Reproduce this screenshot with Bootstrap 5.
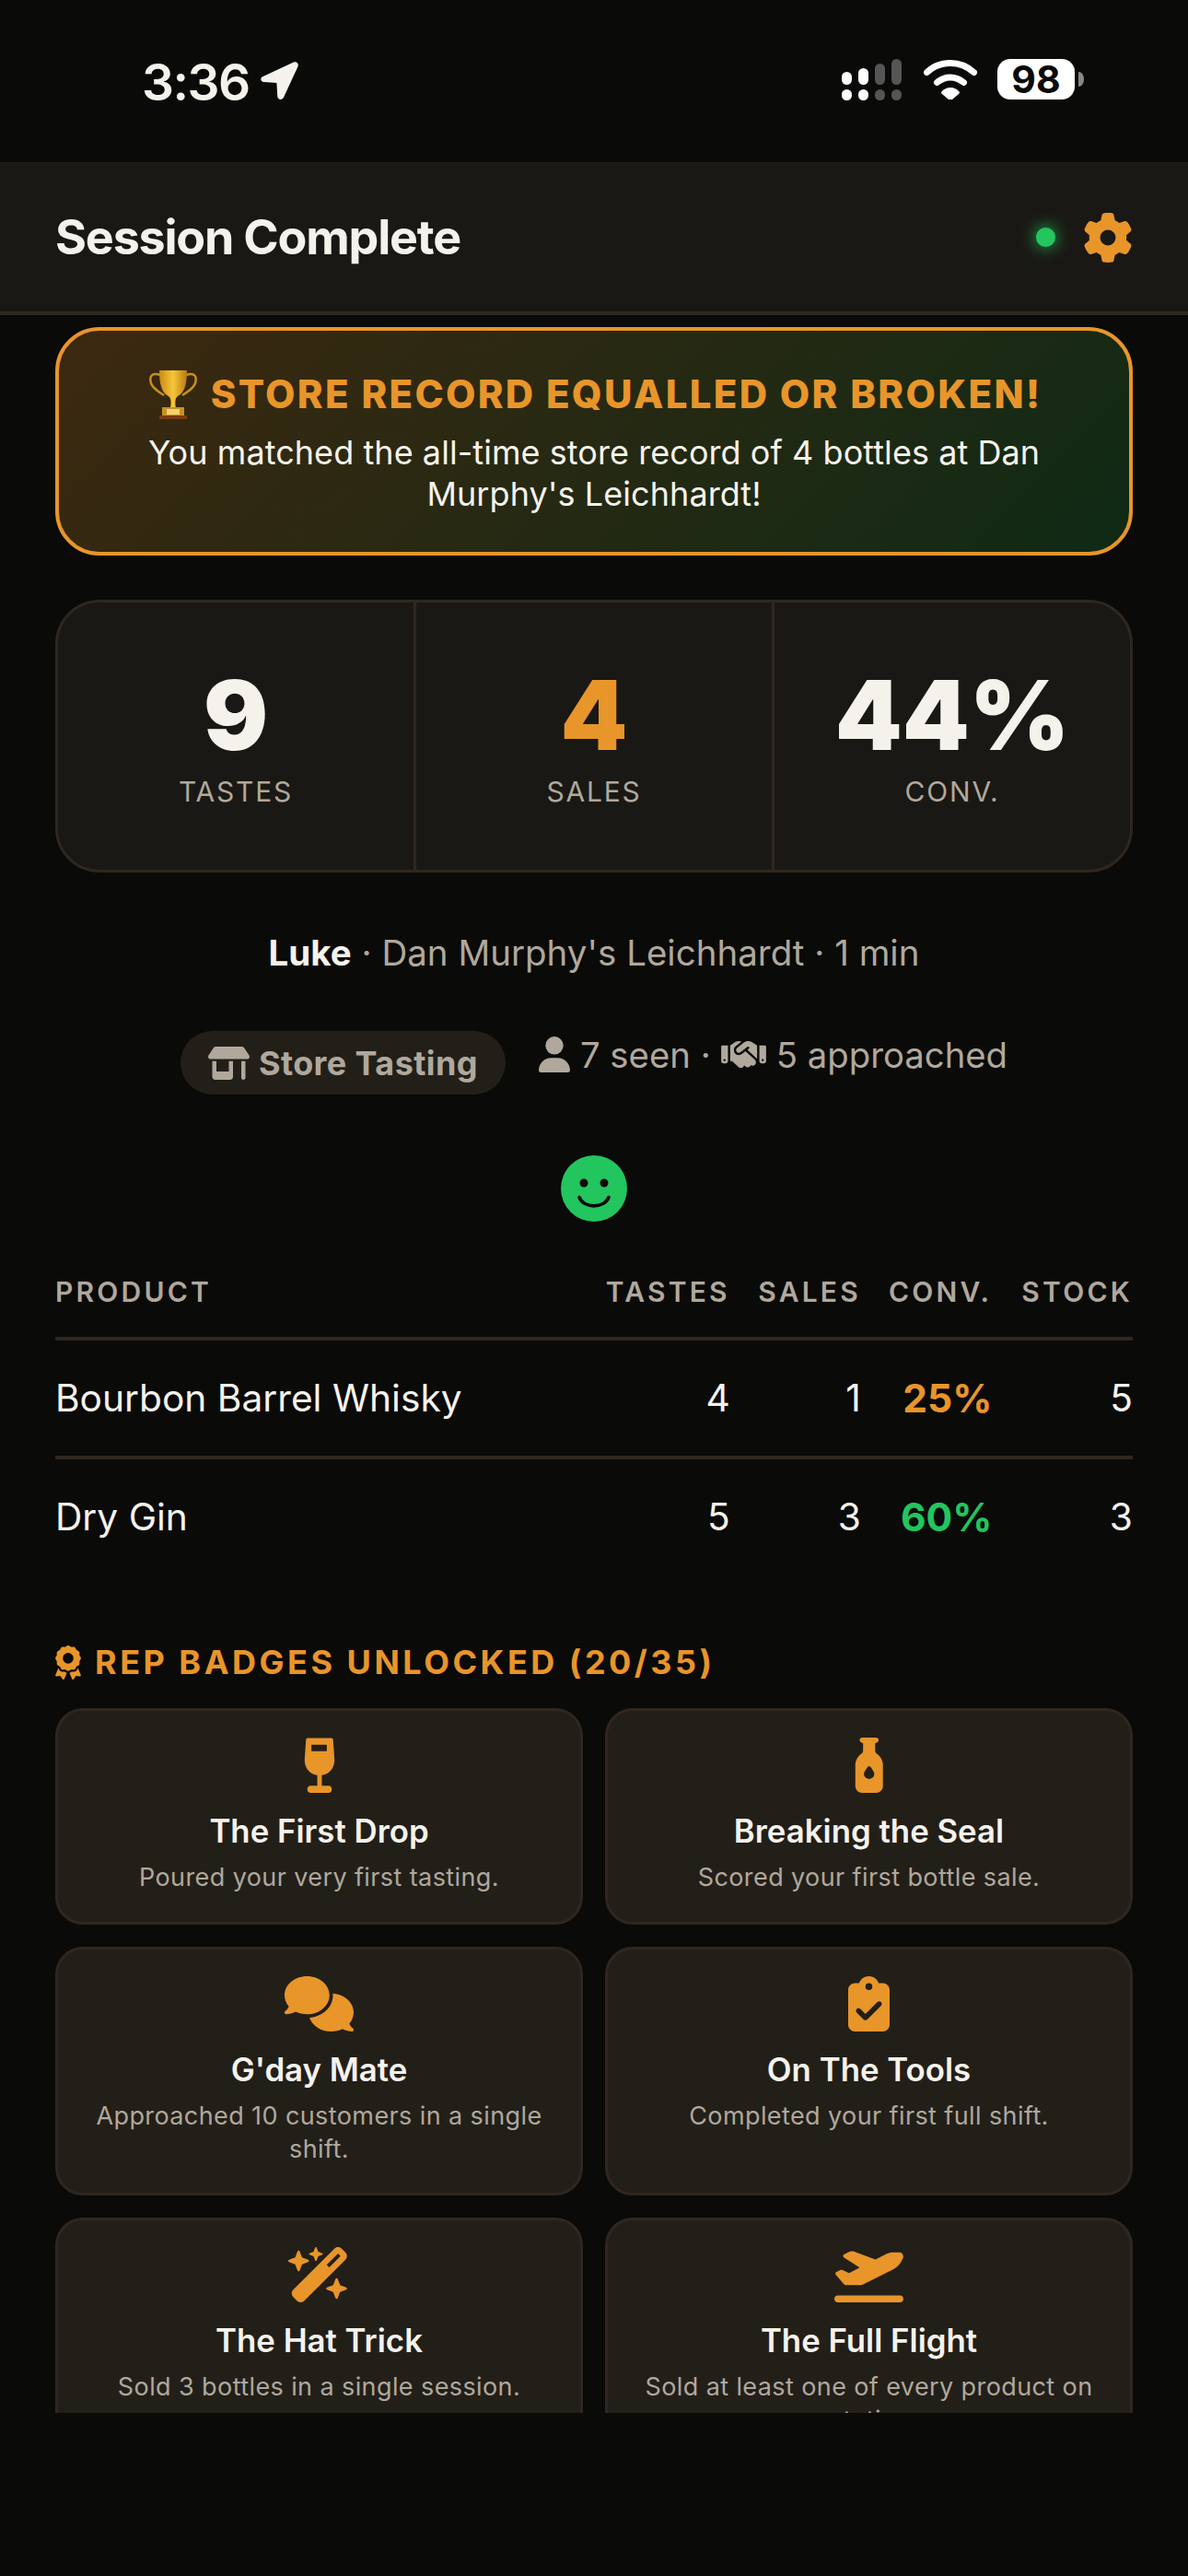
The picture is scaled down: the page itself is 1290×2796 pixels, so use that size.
<!DOCTYPE html>
<html lang="en">
<head>
<meta charset="utf-8">
<title>Session Complete</title>
<link href="https://cdn.jsdelivr.net/npm/bootstrap@5.3.0/dist/css/bootstrap.min.css" rel="stylesheet">
<style>
html,body{background:#0a0a08;margin:0}
body{font-family:Inter,"Liberation Sans",sans-serif;color:#f5f2ec;width:1290px;height:2796px;overflow:hidden}
svg{display:block;fill:currentColor}
.accent{color:#e8952a}.okc{color:#22c55e}.muted{color:#b0a89c}
.statusbar{height:176px;padding:64px 113px 0 154px;align-items:flex-start}
.clock{font-size:55px;font-weight:600;line-height:44px;letter-spacing:-1.500px;margin-top:3px}
.clockwrap{gap:11px}
.arrow{margin-top:2px}
.wifi{margin-left:24px}
.battery{width:84px;height:44px;border-radius:14px;background:#fff;color:#0a0a08;font-size:41px;font-weight:700;line-height:44px;text-align:center;margin-left:22px}
.nub{margin:14px 0 0 4px}
.topbar{height:166px;background:#1a1814;border-top:1px solid #1f1c17;border-bottom:4px solid #2f271f;padding:0 60px}
.topbar h1{font-size:52px;font-weight:700;margin:0;padding-top:2px;color:#f5f2ec;letter-spacing:-1.200px}
.dot{width:21px;height:21px;border-radius:50%;background:#22c55e;box-shadow:0 0 18px #22c55e;margin-right:30px}
.pane{height:2277px;overflow:hidden;padding:13px 60px 0}
.banner{height:248px;border:4px solid #e8952a;border-radius:48px;background:linear-gradient(135deg,#3d2810,#0f2a15);padding:41px 44px 0;text-align:center}
.banner-head{font-size:42px;font-weight:800;letter-spacing:2.300px;line-height:56px;color:#e8952a;gap:15px;padding-left:3px}
.banner-text{font-size:36px;letter-spacing:.06px;line-height:45px;margin-top:13px}
.stats{height:296px;margin-top:48px;border:3px solid #2f271f;border-radius:48px;background:#1a1814;overflow:hidden}
.stat{flex:1 1 0;border-right:3px solid #2f271f;text-align:center;padding-top:61px}
.stat:last-child{border-right:0}
.statnum{font-size:104px;font-weight:900;line-height:122px}
.statlab{font-size:30px;letter-spacing:1.800px;line-height:36px;color:#b0a89c;margin-top:4px}
.meta{font-size:38.500px;line-height:48px;text-align:center;margin-top:63px;color:#b0a89c}
.meta b{color:#f5f2ec;font-weight:700}
.chips{margin-top:61px;gap:36px;height:69px;color:#b0a89c}
.pill{background:#221f19;border-radius:35px;height:69px;padding:0 30px;gap:10px;font-size:36px;font-weight:700;letter-spacing:.4px}
.seen{font-size:38.300px;line-height:48px;gap:11px;height:69px;align-items:flex-start;padding-top:2px}
.mood{margin-top:66px}
.tbl{margin:58px 0 0;width:100%;--bs-table-bg:transparent;--bs-table-color:#f5f2ec;--bs-table-border-color:#2f271f}
.tbl th{font-size:30px;font-weight:600;letter-spacing:3.200px;color:#b0a89c;padding:0 0 31px 33px;line-height:36px;border-bottom:4px solid #2f271f;white-space:nowrap}
.tbl td{font-size:40.700px;line-height:52px;padding:36.500px 0 36.500px 33px;border-bottom:4px solid #2f271f}
.tbl tr:last-child td{border-bottom:0}
.tbl th:first-child,.tbl td:first-child{padding-left:0;width:100%}
.tbl th:nth-child(3),.tbl td:nth-child(3){padding-left:30.500px}
.tbl th:nth-child(4),.tbl td:nth-child(4){padding-left:30px}
.tbl th:nth-child(5),.tbl td:nth-child(5){padding-left:32px}
.tbl td.rate{font-weight:700;font-size:42.500px}
.section{font-size:36px;font-weight:700;letter-spacing:3.500px;color:#e8952a;line-height:44px;margin-top:73px;gap:15px}
.badgegrid{display:grid;grid-template-columns:1fr 1fr;gap:24px;margin-top:28px}
.tile{background:#221f19;border:3px solid #2f271f;border-radius:30px;padding:29px 36px 29.500px;text-align:center}
.tile svg{margin:0 auto;height:60px;color:#e8952a}
.tile h3{font-size:34.800px;font-weight:600;line-height:44px;margin:19px 0 11px;color:#f5f2ec}
.tile p{font-size:27px;letter-spacing:.400px;line-height:36px;margin:0;color:#b0a89c}
</style>
</head>
<body>
<div class="d-flex justify-content-between statusbar">
  <div class="d-flex clockwrap"><span class="clock">3:36</span>
    <svg class="arrow" width="43" height="43" viewBox="0 0 42 42"><path d="M3.500 16.500 36 1.500c3-1.300 5.800 1.500 4.500 4.500L25.500 38.500c-1.700 3.700-6.500 3-6.700-1L18 23.500 4.500 22.500c-3.800-.3-4.500-4.500-1-6z"/></svg>
  </div>
  <div class="d-flex align-items-start">
    <svg width="65" height="45" viewBox="0 0 65 45"><g fill="#fff"><rect y="14" width="11" height="14" rx="5.500"/><rect x="18" y="10" width="11" height="18" rx="5.500"/><rect y="33" width="11" height="12" rx="5.500"/><rect x="18" y="33" width="11" height="12" rx="5.500"/></g><g fill="#555"><rect x="36" y="5" width="11" height="23" rx="5.500"/><rect x="54" width="11" height="28" rx="5.500"/><rect x="36" y="33" width="11" height="12" rx="5.500"/><rect x="54" y="33" width="11" height="12" rx="5.500"/></g></svg>
    <svg class="wifi" width="58" height="44" viewBox="0 0 58 44"><path d="M3.500 14.500C18 1 40 1 54.500 14.500M14.500 25.500C23 18 35 18 43.500 25.500" fill="none" stroke="#fff" stroke-width="7" stroke-linecap="round"/><path d="M19.500 35.500C24 29.500 34 29.500 38.500 35.500 39.500 36.500 39 37 38 38L31 44H27L20 38C19 37 18.500 36.500 19.500 35.500z" fill="#fff"/></svg>
    <div class="battery">98</div>
    <svg class="nub" width="6" height="16" viewBox="0 0 6 16"><path d="M0 0c3.500 0 6 3.500 6 8s-2.500 8-6 8z" fill="#888"/></svg>
  </div>
</div>
<header class="d-flex justify-content-between align-items-center topbar">
  <h1>Session Complete</h1>
  <div class="d-flex align-items-center"><span class="dot"></span>
    <svg class="accent" width="54" height="54" viewBox="0 0 512 512"><path d="M495.900 166.600c3.200 8.700.5 18.400-6.400 24.600l-43.300 39.400c1.100 8.300 1.700 16.800 1.700 25.400s-.6 17.100-1.700 25.400l43.300 39.400c6.900 6.200 9.600 15.900 6.400 24.600c-4.400 11.900-9.700 23.300-15.800 34.300l-4.700 8.100c-6.600 11-14 21.400-22.100 31.200c-5.900 7.200-15.700 9.600-24.500 6.800l-55.700-17.700c-13.400 10.300-28.200 18.900-44 25.400l-12.500 57.100c-2 9.100-9 16.300-18.200 17.800c-13.800 2.300-28 3.500-42.500 3.500s-28.700-1.200-42.500-3.500c-9.200-1.500-16.200-8.700-18.200-17.800l-12.500-57.100c-15.800-6.500-30.600-15.100-44-25.400L83.100 425.900c-8.800 2.800-18.600.3-24.500-6.800c-8.100-9.800-15.500-20.200-22.100-31.200l-4.700-8.100c-6.100-11-11.400-22.400-15.800-34.300c-3.200-8.700-.5-18.400 6.400-24.600l43.300-39.400C64.600 273.100 64 264.600 64 256s.6-17.100 1.700-25.400L22.400 191.200c-6.900-6.200-9.600-15.900-6.400-24.600c4.400-11.900 9.700-23.300 15.800-34.300l4.700-8.100c6.600-11 14-21.400 22.100-31.200c5.900-7.200 15.700-9.600 24.500-6.800l55.700 17.700c13.400-10.300 28.200-18.900 44-25.400l12.500-57.100c2-9.100 9-16.300 18.200-17.800C227.300 1.200 241.500 0 256 0s28.700 1.200 42.500 3.500c9.200 1.500 16.200 8.700 18.200 17.800l12.500 57.100c15.800 6.500 30.600 15.100 44 25.400l55.700-17.700c8.800-2.800 18.600-.3 24.500 6.800c8.100 9.800 15.500 20.200 22.100 31.200l4.700 8.100c6.100 11 11.400 22.400 15.800 34.300zM256 336a80 80 0 1 0 0-160 80 80 0 1 0 0 160z"/></svg>
  </div>
</header>
<main class="pane">
  <section class="banner">
    <div class="d-flex justify-content-center align-items-center banner-head">
      <svg width="52" height="54" viewBox="0 0 52 54"><defs><linearGradient id="gold" x1="0" x2="1"><stop offset="0" stop-color="#c98a12"/><stop offset=".5" stop-color="#f6c63a"/><stop offset="1" stop-color="#b87a10"/></linearGradient></defs><path d="M12 6C2 3 0 8 2 15c2 6 8 9 14 13M40 6c10-3 12 2 10 9-2 6-8 9-14 13" fill="none" stroke="#c8901c" stroke-width="2.500"/><path d="M11 1h30c0 14-2 24-10 28-3 2-3 7-2 13h-6c1-6 1-11-2-13C13 25 11 15 11 1z" fill="url(#gold)"/><rect x="14" y="41" width="24" height="10" fill="#c79223"/><rect x="19" y="43" width="14" height="6" fill="#f2d272"/><rect x="11" y="50" width="30" height="4" fill="#7a3a12"/></svg>
      <span>STORE RECORD EQUALLED OR BROKEN!</span>
    </div>
    <div class="banner-text">You matched the all-time store record of 4 bottles at Dan Murphy's Leichhardt!</div>
  </section>

  <section class="d-flex stats">
    <div class="stat"><div class="statnum">9</div><div class="statlab">TASTES</div></div>
    <div class="stat"><div class="statnum accent">4</div><div class="statlab">SALES</div></div>
    <div class="stat"><div class="statnum">44%</div><div class="statlab">CONV.</div></div>
  </section>

  <div class="meta"><b>Luke</b> · Dan Murphy's Leichhardt · 1 min</div>

  <div class="d-flex justify-content-center chips">
    <div class="d-flex align-items-center pill">
      <svg width="45" height="36" viewBox="0 0 640 512"><path d="M36.800 192H603.200c20.300 0 36.800-16.500 36.800-36.800c0-7.300-2.200-14.400-6.200-20.400L558.200 21.400C549.300 8 534.400 0 518.300 0H121.700c-16 0-31 8-39.900 21.400L6.200 134.700c-4 6.100-6.200 13.200-6.200 20.400C0 175.500 16.500 192 36.800 192zM64 224V384v80c0 26.500 21.500 48 48 48H336c26.500 0 48-21.500 48-48V384 224H320V384H128V224H64zm448 0V480c0 17.700 14.300 32 32 32s32-14.300 32-32V224H512z"/></svg>
      <span>Store Tasting</span>
    </div>
    <div class="d-flex seen">
      <svg width="34" height="39" viewBox="0 0 448 512" class="mt-1"><path d="M224 256A128 128 0 1 0 224 0a128 128 0 1 0 0 256zm-45.700 48C79.800 304 0 383.800 0 482.300C0 498.700 13.300 512 29.700 512H418.300c16.400 0 29.700-13.300 29.700-29.700C448 383.800 368.200 304 269.700 304H178.300z"/></svg>
      <span>7 seen ·</span>
      <svg width="49" height="39" viewBox="0 0 640 512" class="mt-1"><path d="M323.400 85.200l-96.800 78.400c-16.100 13-19.200 36.400-7 53.100c12.900 17.800 38 21.300 55.300 7.800l99.300-77.200c7-5.400 17-4.200 22.500 2.800s4.200 17-2.800 22.500l-20.900 16.200L512 316.800V128h-.7l-3.900-2.500L434.800 79c-15.300-9.800-33.200-15-51.400-15c-21.800 0-43 7.500-60 21.200zm22.800 124.400l-51.700 40.200C263 274.400 217.300 268 193.700 235.600c-22.200-30.500-16.600-73.100 12.700-96.800l83.200-67.300c-11.600-4.900-24.100-7.400-36.800-7.400C234 64 215.700 69.600 200 80l-72 48V352h28.200l91.400 83.400c19.600 17.900 49.900 16.500 67.800-3.100c5.500-6.100 9.200-13.200 11.100-20.600l17 15.600c19.500 17.900 49.900 16.600 67.800-2.900c4.500-4.900 7.800-10.600 9.900-16.500c19.400 13 45.800 10.300 62.100-7.500c17.900-19.500 16.600-49.900-2.900-67.800l-134.200-123zM16 128c-8.800 0-16 7.200-16 16V352c0 17.700 14.300 32 32 32H64c17.700 0 32-14.300 32-32V128H16zM48 320a16 16 0 1 1 0 32 16 16 0 1 1 0-32zM544 128V352c0 17.700 14.300 32 32 32h32c17.700 0 32-14.300 32-32V144c0-8.800-7.200-16-16-16H544zm32 208a16 16 0 1 1 32 0 16 16 0 1 1 -32 0z"/></svg>
      <span>5 approached</span>
    </div>
  </div>

  <div class="d-flex justify-content-center mood">
    <svg width="72" height="72" viewBox="-36 -36 72 72"><circle r="36" fill="#22c55e"/><circle cx="-11" cy="-6" r="4.500" fill="#0a0a08"/><circle cx="11" cy="-6" r="4.500" fill="#0a0a08"/><path d="M-16 9.500C-11 22 11 22 16 9.500" fill="none" stroke="#0a0a08" stroke-width="3.600" stroke-linecap="round"/></svg>
  </div>

  <table class="table tbl">
    <thead><tr><th>PRODUCT</th><th class="text-end">TASTES</th><th class="text-end">SALES</th><th class="text-end">CONV.</th><th class="text-end">STOCK</th></tr></thead>
    <tbody>
      <tr><td>Bourbon Barrel Whisky</td><td class="text-end">4</td><td class="text-end">1</td><td class="text-end rate accent">25%</td><td class="text-end">5</td></tr>
      <tr><td>Dry Gin</td><td class="text-end">5</td><td class="text-end">3</td><td class="text-end rate okc">60%</td><td class="text-end">3</td></tr>
    </tbody>
  </table>

  <div class="d-flex align-items-center section">
    <svg width="28" height="37" viewBox="0 0 384 512"><path d="M173.800 5.500c11-7.300 25.400-7.300 36.400 0L228 17.200c6 3.900 13 5.800 20.100 5.400l21.300-1.300c13.200-.8 25.600 6.400 31.500 18.200l9.600 19.100c3.200 6.400 8.400 11.500 14.700 14.700L344.500 83c11.800 5.900 19 18.300 18.200 31.500l-1.300 21.300c-.4 7.100 1.500 14.200 5.400 20.100l11.800 17.800c7.300 11 7.300 25.400 0 36.400L366.800 228c-3.900 6-5.800 13-5.400 20.100l1.300 21.300c.8 13.200-6.400 25.600-18.200 31.500l-19.100 9.600c-6.400 3.200-11.500 8.400-14.700 14.700L301 344.500c-5.900 11.800-18.300 19-31.500 18.200l-21.300-1.300c-7.100-.4-14.200 1.500-20.100 5.400l-17.800 11.800c-11 7.300-25.400 7.300-36.400 0L156 366.800c-6-3.900-13-5.800-20.100-5.400l-21.300 1.300c-13.200.8-25.600-6.400-31.500-18.200l-9.600-19.100c-3.200-6.400-8.400-11.500-14.700-14.700L39.500 301c-11.800-5.900-19-18.300-18.200-31.500l1.300-21.300c.4-7.100-1.500-14.200-5.400-20.100L5.500 210.200c-7.300-11-7.300-25.400 0-36.400L17.200 156c3.900-6 5.800-13 5.400-20.100l-1.300-21.300c-.8-13.200 6.400-25.600 18.200-31.500l19.100-9.600C65 70.200 70.200 65 73.400 58.600L83 39.500c5.900-11.800 18.300-19 31.500-18.200l21.300 1.300c7.100.4 14.200-1.500 20.100-5.400L173.800 5.500zM272 192a80 80 0 1 0 -160 0 80 80 0 1 0 160 0zM1.300 441.800L44.400 339.300c.2.1.3.2.4.4l9.600 19.100c11.700 23.200 36 37.300 62 35.800l21.300-1.300c.2 0 .5 0 .7.2l17.800 11.800c5.100 3.300 10.500 5.900 16.100 7.700l-37.600 89.300c-2.300 5.500-7.400 9.200-13.300 9.700s-11.600-2.200-14.800-7.200L74.400 455.500l-56.100 8.300c-5.700.8-11.400-1.500-15-6s-4.300-10.700-2.100-16zm248 60.400L211.700 413c5.600-1.800 11-4.300 16.100-7.700l17.800-11.800c.2-.1.4-.2.7-.2l21.300 1.300c26 1.500 50.300-12.600 62-35.800l9.600-19.100c.1-.2.2-.3.4-.4l43.200 102.500c2.200 5.300 1.400 11.400-2.100 16s-9.300 6.900-15 6l-56.100-8.300-32.200 49.200c-3.200 5-8.900 7.700-14.800 7.200s-11-4.300-13.300-9.700z"/></svg>
    <span>REP BADGES UNLOCKED (20/35)</span>
  </div>

  <div class="badgegrid">
    <div class="tile">
      <svg width="34" height="60" viewBox="0 0 34 61"><path fill-rule="evenodd" d="M4 .5H30a2 2 0 0 1 2 2L33.500 25C33.500 34 27 41 19.500 41.500V53h7a4 4 0 0 1 0 8h-19a4 4 0 0 1 0-8h7V41.500C7 41 .5 34 .5 25L2 2.500a2 2 0 0 1 2-2zM8 8v7h17V8z"/></svg>
      <h3>The First Drop</h3><p>Poured your very first tasting.</p>
    </div>
    <div class="tile">
      <svg width="37.500" height="60" viewBox="0 0 320 512"><path d="M96 0C82.700 0 72 10.700 72 24s10.700 24 24 24c4.400 0 8 3.600 8 8v64.900c0 12.200-7.200 23.100-17.200 30.100C53.700 174.100 32 212.500 32 256V448c0 35.300 28.700 64 64 64H224c35.300 0 64-28.700 64-64V256c0-43.500-21.700-81.900-54.800-105c-10-7-17.200-17.900-17.200-30.100V56c0-4.400 3.600-8 8-8c13.300 0 24-10.700 24-24s-10.700-24-24-24H96zm64 382c-26.500 0-48-20.100-48-45c0-16.800 22.100-48.100 36.300-66.400c6-7.800 17.500-7.800 23.500 0C185.900 288.900 208 320.200 208 337c0 24.900-21.500 45-48 45z"/></svg>
      <h3>Breaking the Seal</h3><p>Scored your first bottle sale.</p>
    </div>
    <div class="tile">
      <svg width="75" height="60" viewBox="0 0 640 512"><path d="M208 352c114.900 0 208-78.800 208-176S322.900 0 208 0S0 78.800 0 176c0 38.600 14.700 74.300 39.600 103.400c-3.500 9.400-8.700 17.700-14.200 24.700c-4.800 6.200-9.700 11-13.300 14.300c-1.800 1.600-3.300 2.900-4.300 3.700c-.5.400-.9.700-1.100.8l-.2.200C1 327.200-1.400 334.400.8 340.900S9.100 352 16 352c21.800 0 43.800-5.600 62.100-12.500c9.200-3.500 17.800-7.400 25.300-11.400C134.100 343.300 169.800 352 208 352zM448 176c0 112.300-99.100 196.900-216.500 207C255.800 457.400 336.400 512 432 512c38.200 0 73.900-8.700 104.700-23.900c7.500 4 16 7.900 25.200 11.400c18.300 6.900 40.300 12.500 62.100 12.500c6.900 0 13.100-4.500 15.200-11.100c2.100-6.600-.2-13.800-5.800-17.900l-.2-.2c-.2-.2-.6-.4-1.100-.8c-1-.8-2.500-2-4.300-3.700c-3.600-3.300-8.500-8.100-13.300-14.300c-5.500-7-10.700-15.400-14.200-24.700c24.900-29 39.600-64.700 39.600-103.400c0-92.800-84.900-168.900-192.600-175.500c.4 5.100.6 10.300.6 15.500z"/></svg>
      <h3>G'day Mate</h3><p>Approached 10 customers in a single shift.</p>
    </div>
    <div class="tile">
      <svg width="45" height="60" viewBox="0 0 384 512"><path d="M192 0c-41.800 0-77.400 26.700-90.500 64H64C28.700 64 0 92.700 0 128V448c0 35.300 28.700 64 64 64H320c35.300 0 64-28.700 64-64V128c0-35.300-28.700-64-64-64H282.500C269.400 26.700 233.800 0 192 0zm0 64a32 32 0 1 1 0 64 32 32 0 1 1 0-64zM305 273L177 401c-9.400 9.400-24.600 9.400-33.900 0L79 337c-9.400-9.400-9.400-24.600 0-33.900s24.600-9.400 33.900 0l47 47L271 239c9.400-9.400 24.600-9.400 33.900 0s9.400 24.600 0 33.900z"/></svg>
      <h3>On The Tools</h3><p>Completed your first full shift.</p>
    </div>
    <div class="tile">
      <svg width="67.500" height="60" viewBox="0 0 576 512"><path d="M234.700 42.700L197 56.800c-3 1.100-5 4-5 7.200s2 6.100 5 7.200l37.700 14.100L248.800 123c1.100 3 4 5 7.200 5s6.100-2 7.200-5l14.100-37.700L315 71.200c3-1.100 5-4 5-7.200s-2-6.100-5-7.200L277.300 42.700 263.200 5c-1.100-3-4-5-7.200-5s-6.100 2-7.200 5L234.700 42.700zM46.100 395.400c-18.700 18.700-18.700 49.100 0 67.900l34.600 34.600c18.700 18.700 49.100 18.700 67.900 0L529.900 116.500c18.700-18.700 18.700-49.100 0-67.900L495.300 14.100c-18.700-18.700-49.100-18.700-67.900 0L46.100 395.400zM484.600 82.600l-105 105-23.300-23.300 105-105 23.300 23.300zM7.500 117.200C3 118.900 0 123.200 0 128s3 9.100 7.500 10.800L64 160l21.200 56.500c1.700 4.500 6 7.500 10.800 7.500s9.100-3 10.800-7.500L128 160l56.500-21.200c4.500-1.700 7.500-6 7.500-10.800s-3-9.100-7.500-10.800L128 96 106.800 39.500C105.100 35 100.800 32 96 32s-9.100 3-10.800 7.500L64 96 7.500 117.200zm352 256c-4.500 1.700-7.500 6-7.500 10.800s3 9.100 7.500 10.800L416 416l21.200 56.500c1.700 4.500 6 7.500 10.800 7.500s9.100-3 10.800-7.500L480 416l56.500-21.200c4.500-1.700 7.500-6 7.500-10.800s-3-9.100-7.500-10.800L480 352l-21.200-56.500c-1.700-4.500-6-7.500-10.800-7.500s-9.100 3-10.800 7.500L416 352l-56.500 21.200z"/></svg>
      <h3>The Hat Trick</h3><p>Sold 3 bottles in a single session.</p>
    </div>
    <div class="tile">
      <svg width="75" height="60" viewBox="0 0 640 512"><path d="M381 114.900L186.100 41.800c-16.700-6.200-35.200-5.300-51.100 2.700L89.100 67.400C78 73 77.200 88.500 87.600 95.200l146.900 94.500L136 240 77.800 214.100c-8.700-3.900-18.800-3.700-27.300.6L18.300 230.800c-9.300 4.700-11.800 16.800-5 24.700l73.100 85.300c6.100 7.100 15 11.200 24.300 11.200H248.400c5 0 9.900-1.200 14.300-3.400L535.600 212.200c46.500-23.300 82.500-63.300 100.800-112C645.900 75 627.200 48 600.200 48H542.800c-20.200 0-40.200 4.800-58.200 14L381 114.900zM0 480c0 17.700 14.300 32 32 32H608c17.700 0 32-14.300 32-32s-14.300-32-32-32H32c-17.700 0-32 14.300-32 32z"/></svg>
      <h3>The Full Flight</h3><p>Sold at least one of every product on rotation.</p>
    </div>
  </div>
</main>
<script src="https://cdn.jsdelivr.net/npm/bootstrap@5.3.0/dist/js/bootstrap.bundle.min.js"></script>
</body>
</html>
